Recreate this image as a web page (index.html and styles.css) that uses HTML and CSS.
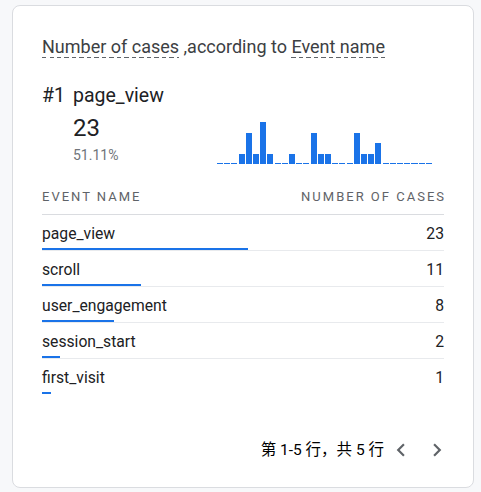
FILE: index.html
```html
<!DOCTYPE html>
<html>
<head>
<meta charset="utf-8">
<link rel="stylesheet" href="styles.css">
</head>
<body>
<div class="card">
  <div class="title"><span class="dashed">Number of cases</span> ,according to <span class="dashed">Event name</span></div>
  <div class="top-item"><span class="rank">#1</span><span>page_view</span></div>
  <div class="summary">
    <div class="stats">
      <div class="big">23</div>
      <div class="pct">51.11%</div>
    </div>
    <div class="chart">
      <i style="height:0%"></i><i style="height:0%"></i><i style="height:0%"></i><i style="height:25%"></i><i style="height:75%"></i><i style="height:25%"></i><i style="height:100%"></i><i style="height:25%"></i><i style="height:0%"></i><i style="height:0%"></i><i style="height:25%"></i><i style="height:0%"></i><i style="height:0%"></i><i style="height:75%"></i><i style="height:25%"></i><i style="height:25%"></i><i style="height:0%"></i><i style="height:0%"></i><i style="height:0%"></i><i style="height:75%"></i><i style="height:25%"></i><i style="height:25%"></i><i style="height:50%"></i><i style="height:0%"></i><i style="height:0%"></i><i style="height:0%"></i><i style="height:0%"></i><i style="height:0%"></i><i style="height:0%"></i><i style="height:0%"></i>
    </div>
  </div>
  <div class="table">
    <div class="thead"><span>EVENT NAME</span><span>NUMBER OF CASES</span></div>
    <div class="row"><div class="cells"><span>page_view</span><span>23</span></div><div class="bar" style="width:206px"></div></div>
    <div class="row"><div class="cells"><span>scroll</span><span>11</span></div><div class="bar" style="width:98.5px"></div></div>
    <div class="row"><div class="cells"><span>user_engagement</span><span>8</span></div><div class="bar" style="width:71.7px"></div></div>
    <div class="row"><div class="cells"><span>session_start</span><span>2</span></div><div class="bar" style="width:17.9px"></div></div>
    <div class="row last"><div class="cells"><span>first_visit</span><span>1</span></div><div class="bar" style="width:9px"></div></div>
  </div>
  <div class="pager">
    <span class="pager-text">第 1-5 行，共 5 行</span>
    <svg class="chev" viewBox="0 0 24 24" width="26" height="26"><path d="M15.41 7.41L14 6l-6 6 6 6 1.41-1.41L10.83 12z"/></svg>
    <svg class="chev" viewBox="0 0 24 24" width="26" height="26"><path d="M10 6L8.59 7.41 13.17 12l-4.58 4.59L10 18l6-6z"/></svg>
  </div>
</div>
</body>
</html>
```

FILE: styles.css
```css
html, body {
  margin: 0;
  padding: 0;
}
body {
  background: #f7f8fa;
  padding: 5px 7px 4px 12px;
  font-family: Roboto, "Noto Sans CJK SC", sans-serif;
  color: #202124;
}
.card {
  box-sizing: border-box;
  height: 483px;
  background: #fff;
  border: 1px solid #dadce0;
  border-radius: 8px;
  padding: 30px 29px 0 29px;
  display: flex;
  flex-direction: column;
}
.title {
  font-size: 18px;
  line-height: 22px;
  color: #3c4043;
}
.dashed {
  padding-bottom: 1px;
  background-image: repeating-linear-gradient(to right, #5f6368 0 4.5px, transparent 4.5px 7.5px);
  background-size: 100% 1.5px;
  background-repeat: no-repeat;
  background-position: left bottom;
}
.top-item {
  margin-top: 26px;
  font-size: 19.5px;
  line-height: 24px;
  display: flex;
}
.rank {
  width: 31px;
}
.summary {
  display: flex;
  align-items: flex-end;
  padding-left: 31px;
  margin-top: 6px;
}
.stats {
  width: 144px;
}
.big {
  font-size: 24px;
  line-height: 28px;
}
.pct {
  margin-top: 4px;
  font-size: 14px;
  line-height: 18px;
  color: #70757a;
}
.chart {
  width: 215px;
  height: 42px;
  display: flex;
  align-items: flex-end;
  gap: 1.2px;
}
.chart i {
  flex: 1;
  min-height: 1px;
  background: #1a73e8;
}
.table {
  margin-top: 25px;
}
.thead {
  display: flex;
  justify-content: space-between;
  font-size: 13px;
  line-height: 16px;
  letter-spacing: 2px;
  color: #5f6368;
  padding-bottom: 9px;
  border-bottom: 1px solid #dadce0;
}
.thead span:last-child {
  margin-right: -2px;
}
.row {
  padding-top: 9px;
  border-bottom: 1px solid #e8eaed;
}
.row.last {
  border-bottom-color: transparent;
}
.cells {
  display: flex;
  justify-content: space-between;
  font-size: 15.7px;
  line-height: 20px;
}
.bar {
  margin-top: 4px;
  height: 2px;
  background: #1a73e8;
}
.pager {
  margin-top: 42px;
  display: flex;
  align-items: center;
  justify-content: flex-end;
  margin-right: -6px;
  gap: 4px;
}
.pager-text {
  font-size: 15.5px;
  line-height: 20px;
  color: #000;
}
.chev {
  fill: #5f6368;
}
.chev + .chev {
  margin-left: 6px;
}
```
